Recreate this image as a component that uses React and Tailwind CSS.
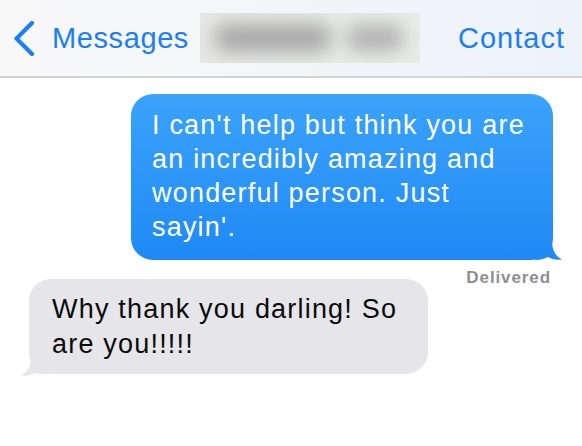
const font = { fontFamily: '"Liberation Sans", Arial, sans-serif' }

const BackChevron = () => (
    <svg className="w-[24px] h-[36px] shrink-0" viewBox="0 0 24 36" fill="none">
        <path d="M20 3 L4.5 18.5 L20 34" stroke="#1a7ef7" strokeWidth={4.2} strokeLinecap="round" strokeLinejoin="round" />
    </svg>
)

const BlueTail = () => (
    <svg className="absolute right-[-10px] bottom-0 w-[28px] h-[26px]" viewBox="0 0 28 26">
        <path d="M17 0 L17 7 C17 16 20 22 27 25.5 C21 26.3 16.5 25 13 23 C10 24.5 6 26 0 26 L0 0 Z" fill="#1f89f5" />
    </svg>
)

const GrayTail = () => (
    <svg className="absolute left-[-9px] bottom-[-2px] w-[28px] h-[26px]" viewBox="0 0 28 26">
        <path d="M11 0 L11 7 C11 16 8 22 1 25.5 C7 26.3 11.5 25 15 23 C18 24.5 22 24 28 24 L28 0 Z" fill="#e5e5ea" />
    </svg>
)

export default function App() {
    return (
        <div className="w-[582px] h-[446px] bg-white overflow-hidden" style={font}>
            {/* Header */}
            <div className="h-[78px] flex items-center pl-[12px] pr-[17px] border-b-2 border-[#d3d3d6] bg-gradient-to-r from-[#f8f8f9] via-[#f3f5f8] to-[#edf3fa]">
                <BackChevron />
                <span className="ml-[16px] text-[29px] leading-none tracking-[0.6px] text-[#1a7ef7]">Messages</span>
                <div className="ml-[11px] w-[220px] h-[50px] flex items-center gap-[14px] px-[14px] bg-gradient-to-r from-[#e6e7e5] to-[#e8ece8] overflow-hidden">
                    <div className="w-[118px] h-[28px] rounded-full bg-[#a9a9a9] blur-[9px]" />
                    <div className="w-[58px] h-[26px] rounded-full bg-[#b2b2b2] blur-[9px]" />
                </div>
                <span className="ml-auto text-[29px] leading-none tracking-[1px] text-[#1a7ef7]">Contact</span>
            </div>

            {/* Conversation */}
            <div className="flex flex-col">
                <div className="self-end mr-[29px] mt-[16px] relative w-[422px]">
                    <div className="relative z-10 rounded-[22px] bg-gradient-to-b from-[#3aa3fb] to-[#1f89f5] pl-[21px] pr-[10px] pt-[14px] pb-[16px] text-white text-[27px] leading-[34px] tracking-[1.2px] whitespace-nowrap">
                        I can't help but think you are<br />
                        an incredibly amazing and<br />
                        wonderful person. Just<br />
                        sayin'.
                    </div>
                    <BlueTail />
                </div>
                <div className="self-end mr-[31px] mt-[8px] h-[20px] leading-[20px] text-[17px] font-bold tracking-[0.9px] text-[#8e8e93]">
                    Delivered
                </div>
                <div className="self-start ml-[29px] mt-[-9px] relative w-[399px]">
                    <div className="relative z-10 rounded-[22px] bg-[#e5e5ea] pl-[23px] pr-[10px] pt-[13px] pb-[12px] text-[#0a0a0a] text-[27px] leading-[35px] tracking-[1.2px] whitespace-nowrap">
                        Why thank you darling! So<br />
                        are you!!!!!
                    </div>
                    <GrayTail />
                </div>
            </div>
        </div>
    )
}
